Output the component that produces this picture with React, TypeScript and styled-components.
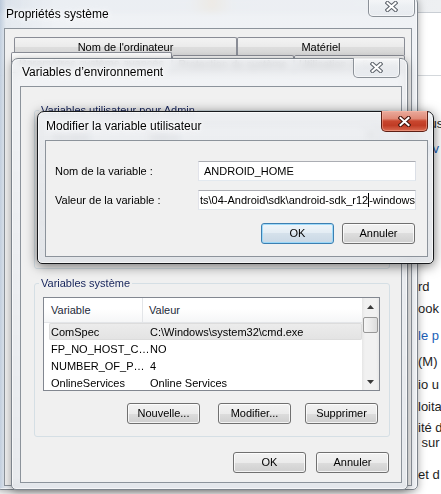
import React from "react";
import styled, { createGlobalStyle, css } from "styled-components";

const FONT = `"Liberation Sans", Arial, sans-serif`;

const GlobalStyle = createGlobalStyle`
  html, body { margin: 0; padding: 0; background: #fff; }
  body { font-family: ${FONT}; font-size: 11px; color: #000; overflow: hidden; }
`;

const Desktop = styled.div`
  position: relative;
  width: 441px;
  height: 494px;
  overflow: hidden;
  background: #fff;
  font-family: ${FONT};
  font-size: 11px;
  color: #000;
`;

/* ---------- page behind the windows ---------- */
const Backdrop = styled.div`
  position: absolute;
  inset: 0;
  z-index: 0;
  display: flex;
  flex-direction: column;
  background: #fff;
`;
const PageToolbar = styled.div`
  flex: none;
  height: 12px;
  border-bottom: 1px solid #c9ced4;
  background: linear-gradient(
    90deg,
    #b9c6d6 0,
    #e3e8ee 30px,
    #e7eaee 190px,
    #efcf9c 212px,
    #e7eaee 232px,
    #eef0f2 100%
  );
`;
const PageRule = styled.div`
  flex: none;
  margin-top: 62px;
  border-top: 1px solid #d4d8dc;
`;
const PageColumn = styled.div`
  display: flex;
  flex-direction: column;
  align-items: flex-start;
  font-family: ${FONT};
  font-size: 13px;
  line-height: 15px;
  white-space: nowrap;
`;
const PageLine = styled.div<{ $gap: number; $x?: number; $link?: boolean }>`
  margin-top: ${(p) => p.$gap}px;
  margin-left: ${(p) => p.$x ?? 418}px;
  color: ${(p) => (p.$link ? "#1c5fb8" : "#1e1e1e")};
`;

/* ---------- window chrome ---------- */
const FrameWindow = styled.section<{
  $x: number;
  $y: number;
  $w: number;
  $h: number;
  $z: number;
  $pad: string;
  $active?: boolean;
  $tint?: boolean;
}>`
  position: absolute;
  left: ${(p) => p.$x}px;
  top: ${(p) => p.$y}px;
  width: ${(p) => p.$w}px;
  height: ${(p) => p.$h}px;
  z-index: ${(p) => p.$z};
  box-sizing: border-box;
  display: flex;
  flex-direction: column;
  padding: ${(p) => p.$pad};
  border: 1px solid ${(p) => (p.$active ? "#17191c" : "#7d848c")};
  border-radius: 7px 7px 5px 5px;
  background: ${(p) =>
    p.$active
      ? "linear-gradient(180deg, rgba(236,238,241,0.86) 0%, rgba(224,227,231,0.92) 100%)"
      : p.$tint
      ? "linear-gradient(90deg, rgba(170,188,210,0.92) 0px, rgba(224,230,237,0.86) 9px, rgba(236,239,243,0.84) 60px, rgba(236,239,243,0.84) 100%)"
      : "linear-gradient(180deg, rgba(238,240,243,0.82) 0%, rgba(230,233,237,0.9) 100%)"};
  backdrop-filter: blur(3px);
  box-shadow: inset 0 0 0 1px rgba(255, 255, 255, 0.6),
    0 2px ${(p) => (p.$active ? "12px" : "8px")}
      rgba(0, 0, 0, ${(p) => (p.$active ? 0.55 : 0.35)});
`;

const TitleBar = styled.header<{ $h: number }>`
  flex: none;
  height: ${(p) => p.$h}px;
  display: flex;
  justify-content: space-between;
  align-items: flex-start;
`;

const Caption = styled.h1<{ $top: number; $left: number }>`
  margin: 0;
  padding: ${(p) => p.$top}px 0 0 ${(p) => p.$left}px;
  font: 400 12px/15px ${FONT};
  color: #000;
  white-space: nowrap;
  text-shadow: 0 0 6px #fff, 0 0 3px #fff;
`;

const CloseButton = styled.div<{ $h: number; $right: number; $active?: boolean }>`
  flex: none;
  box-sizing: border-box;
  width: 47px;
  height: ${(p) => p.$h}px;
  margin: -1px ${(p) => p.$right}px 0 0;
  display: flex;
  align-items: center;
  justify-content: center;
  border: 1px solid ${(p) => (p.$active ? "#5e1f15" : "#8b9198")};
  border-top: none;
  border-radius: 0 0 5px 5px;
  ${(p) =>
    p.$active
      ? css`
          background: linear-gradient(
            180deg,
            #eaab9d 0%,
            #e08a77 38%,
            #c9472f 50%,
            #c03c25 72%,
            #da6b52 100%
          );
          box-shadow: inset 0 0 0 1px rgba(255, 190, 170, 0.45);
        `
      : css`
          background: linear-gradient(
            180deg,
            rgba(255, 255, 255, 0.6) 0%,
            rgba(236, 239, 243, 0.55) 50%,
            rgba(226, 230, 235, 0.6) 100%
          );
          box-shadow: inset 0 0 0 1px rgba(255, 255, 255, 0.55);
        `}
`;

const CloseGlyph: React.FC<{ active?: boolean }> = ({ active }) => (
  <svg width="13" height="11" viewBox="0 0 13 11">
    <path
      d="M2.5 2 L10.5 9 M10.5 2 L2.5 9"
      stroke={active ? "#43140c" : "#60666e"}
      strokeWidth="4.2"
      strokeLinecap="square"
      fill="none"
    />
    <path
      d="M2.5 2 L10.5 9 M10.5 2 L2.5 9"
      stroke="#ffffff"
      strokeWidth="2"
      strokeLinecap="square"
      fill="none"
    />
  </svg>
);

const Client = styled.div`
  flex: 1;
  min-height: 0;
  box-sizing: border-box;
  display: flex;
  flex-direction: column;
  border: 1px solid #8c939b;
  background: #f0f0f0;
  overflow: hidden;
`;

/* ---------- tabs (System properties) ---------- */
const TabStrip = styled.div`
  flex: 1;
  display: flex;
  flex-direction: column;
  padding: 8px 0 0 6px;
`;
const TabRow = styled.div<{ $h: number; $indent: number }>`
  flex: none;
  display: flex;
  align-items: flex-end;
  height: ${(p) => p.$h}px;
  padding-left: ${(p) => p.$indent}px;
`;
const Tab = styled.div<{ $w: number; $h: number; $selected?: boolean }>`
  position: relative;
  z-index: ${(p) => (p.$selected ? 1 : 0)};
  flex: none;
  box-sizing: border-box;
  width: ${(p) => p.$w}px;
  height: ${(p) => p.$h}px;
  display: flex;
  align-items: center;
  justify-content: center;
  border: 1px solid #898c95;
  border-bottom: none;
  border-radius: 2px 2px 0 0;
  font-size: 11px;
  white-space: nowrap;
  color: #000;
  background: ${(p) =>
    p.$selected
      ? "#fcfcfc"
      : "linear-gradient(180deg, #f3f3f3 0%, #ebebeb 50%, #dedede 50%, #d6d6d6 100%)"};
`;
const TabPage = styled.div`
  flex: 1;
  width: 394px;
  box-sizing: border-box;
  border: 1px solid #898c95;
  background: #fcfcfc;
`;

/* ---------- group boxes, list views, buttons ---------- */
const EnvBody = styled.div`
  flex: 1;
  display: flex;
  flex-direction: column;
  padding: 17px 11px 0 13px;
`;

const GroupBox = styled.fieldset<{ $h: number; $mt?: number }>`
  flex: none;
  box-sizing: border-box;
  height: ${(p) => p.$h}px;
  margin: ${(p) => p.$mt ?? 0}px 0 0 0;
  padding: 0 9px 0 8px;
  min-width: 0;
  border: 1px solid #d5dfe5;
  border-radius: 3px;
  display: flex;
  flex-direction: column;
`;
const GroupLegend = styled.legend`
  margin-left: -4px;
  padding: 0 2px;
  font: 11px/13px ${FONT};
  color: #15235a;
`;

const ListView = styled.div<{ $h: number }>`
  flex: none;
  margin-top: 7px;
  height: ${(p) => p.$h}px;
  box-sizing: border-box;
  display: flex;
  border: 1px solid #828790;
  background: #fff;
`;
const ListMain = styled.div`
  flex: 1;
  min-width: 0;
  display: flex;
  flex-direction: column;
  overflow: hidden;
`;
const ListHeader = styled.div`
  flex: none;
  display: grid;
  grid-template-columns: 99px 1fr;
  height: 25px;
  box-sizing: border-box;
  border-bottom: 1px solid #e3e5e8;
  background: linear-gradient(180deg, #ffffff 0%, #ffffff 45%, #f5f6f7 100%);
`;
const HeaderCell = styled.div<{ $pad: number; $divider?: boolean }>`
  display: flex;
  align-items: center;
  padding-left: ${(p) => p.$pad}px;
  border-right: ${(p) => (p.$divider ? "1px solid #e3e5e8" : "none")};
  white-space: nowrap;
  color: #1e2a3a;
`;
const ListRow = styled.div<{ $selected?: boolean }>`
  flex: none;
  display: grid;
  grid-template-columns: 99px 1fr;
  align-items: center;
  height: 17px;
  margin-left: 5px;
  box-sizing: border-box;
  border-radius: 2px;
  ${(p) =>
    p.$selected &&
    css`
      background: linear-gradient(180deg, #ececec 0%, #e3e3e3 100%);
      box-shadow: inset 0 0 0 1px #dcdcdc;
    `}
`;
const Cell = styled.div`
  padding-left: 2px;
  white-space: nowrap;
  overflow: hidden;
`;

const ScrollBar = styled.div`
  flex: none;
  width: 17px;
  display: flex;
  flex-direction: column;
  background: linear-gradient(90deg, #e6e6e6 0, #f1f1f1 3px, #f1f1f1 14px, #e8e8e8 100%);
`;
const ScrollArrow = styled.div`
  flex: none;
  height: 17px;
  display: flex;
  align-items: center;
  justify-content: center;
`;
const ScrollThumb = styled.div`
  flex: none;
  margin: 2px 1px 0;
  height: 16px;
  box-sizing: border-box;
  border: 1px solid #989898;
  border-radius: 2px;
  background: linear-gradient(90deg, #f5f5f5 0%, #e9e9e9 55%, #dcdcdc 100%);
`;
const ScrollSpacer = styled.div`
  flex: 1;
`;

const Arrow: React.FC<{ down?: boolean }> = ({ down }) => (
  <svg width="7" height="4" viewBox="0 0 7 4">
    <polygon points={down ? "0,0 7,0 3.5,4" : "0,4 7,4 3.5,0"} fill="#3a3a3a" />
  </svg>
);

const ButtonRow = styled.div<{ $mt: number; $right: number; $gap?: number }>`
  flex: none;
  display: flex;
  justify-content: flex-end;
  gap: ${(p) => p.$gap ?? 0}px;
  margin-top: ${(p) => p.$mt}px;
  padding-right: ${(p) => p.$right}px;
`;

const PushButton = styled.div<{ $default?: boolean; $ml?: number }>`
  flex: none;
  box-sizing: border-box;
  width: 73px;
  height: 21px;
  margin-left: ${(p) => p.$ml ?? 0}px;
  display: flex;
  align-items: center;
  justify-content: center;
  font: 11px/13px ${FONT};
  color: #000;
  border: 1px solid ${(p) => (p.$default ? "#3c7fb1" : "#707070")};
  border-radius: 3px;
  background: ${(p) =>
    p.$default
      ? "linear-gradient(180deg, #eef5fa 0%, #e3ecf3 50%, #d5e1eb 50%, #c9d8e5 100%)"
      : "linear-gradient(180deg, #f2f2f2 0%, #ebebeb 50%, #dddddd 50%, #cfcfcf 100%)"};
  box-shadow: inset 0 0 0 1px
    ${(p) => (p.$default ? "rgba(150,215,250,0.9)" : "rgba(255,255,255,0.75)")};
`;

/* ---------- edit dialog ---------- */
const EditForm = styled.div`
  flex: 1;
  display: flex;
  flex-direction: column;
  padding: 20px 11px 12px 9px;
`;
const FieldGrid = styled.div`
  display: grid;
  grid-template-columns: 143px 218px;
  row-gap: 9px;
  align-items: center;
`;
const FieldLabel = styled.label`
  font: 11px/13px ${FONT};
  white-space: nowrap;
`;
const TextField = styled.div<{ $pad: number }>`
  box-sizing: border-box;
  height: 20px;
  display: flex;
  align-items: center;
  padding-left: ${(p) => p.$pad}px;
  border: 1px solid;
  border-color: #abadb3 #dbdfe6 #e3e9ef #e2e3ea;
  background: #fff;
  overflow: hidden;
  white-space: nowrap;
  font: 11px/13px ${FONT};
`;
const Caret = styled.span`
  flex: none;
  width: 0;
  height: 14px;
  border-left: 1px solid #000;
`;

/* ---------- data ---------- */
type Var = { name: string; value: string };

const systemVars: Var[] = [
  { name: "ComSpec", value: "C:\\Windows\\system32\\cmd.exe" },
  { name: "FP_NO_HOST_C\u2026", value: "NO" },
  { name: "NUMBER_OF_P\u2026", value: "4" },
  { name: "OnlineServices", value: "Online Services" },
];

const VarList: React.FC<{ rows: Var[]; h: number; selected?: number }> = ({
  rows,
  h,
  selected,
}) => (
  <ListView $h={h}>
    <ListMain>
      <ListHeader>
        <HeaderCell $pad={7} $divider>
          Variable
        </HeaderCell>
        <HeaderCell $pad={6}>Valeur</HeaderCell>
      </ListHeader>
      {rows.map((r, i) => (
        <ListRow key={r.name} $selected={i === selected}>
          <Cell>{r.name}</Cell>
          <Cell>{r.value}</Cell>
        </ListRow>
      ))}
    </ListMain>
    <ScrollBar>
      <ScrollArrow>
        <Arrow />
      </ScrollArrow>
      <ScrollThumb />
      <ScrollSpacer />
      <ScrollArrow>
        <Arrow down />
      </ScrollArrow>
    </ScrollBar>
  </ListView>
);

const pageLines: { text: string; gap: number; link?: boolean; x?: number }[] = [
  { text: "Plus", gap: 40 },
  { text: "env", gap: 10, link: true },
  { text: "rd", gap: 123 },
  { text: "ook", gap: 7 },
  { text: "le p", gap: 12, link: true },
  { text: "(M)", gap: 11 },
  { text: "io u", gap: 8 },
  { text: "loita", gap: 7 },
  { text: "ité d", gap: 6 },
  { text: "\u00a0sur", gap: 0 },
  { text: "et d", gap: 17 },
  { text: "Dimensions et autres informations", gap: 9, x: 2 },
];

export default function App() {
  return (
    <>
      <GlobalStyle />
      <Desktop>
        <Backdrop>
          <PageToolbar />
          <PageRule />
          <PageColumn>
            {pageLines.map((l) => (
              <PageLine key={l.text} $gap={l.gap} $link={l.link} $x={l.x}>
                {l.text}
              </PageLine>
            ))}
          </PageColumn>
        </Backdrop>

        {/* Propriétés système */}
        <FrameWindow $x={-4} $y={-4} $w={422} $h={494} $z={1} $pad="0 5px 3px 7px" $tint>
          <TitleBar $h={31}>
            <Caption $top={10} $left={2}>
              Propriétés système
            </Caption>
            <CloseButton $h={21} $right={-3}>
              <CloseGlyph />
            </CloseButton>
          </TitleBar>
          <Client>
            <TabStrip>
              <TabRow $h={18} $indent={3}>
                <Tab $w={223} $h={18}>
                  Nom de l'ordinateur
                </Tab>
                <Tab $w={168} $h={18}>
                  Matériel
                </Tab>
              </TabRow>
              <TabRow $h={17} $indent={0}>
                <Tab $w={161} $h={20} $selected>
                  Paramètres système avancés
                </Tab>
                <Tab $w={122} $h={17}>
                  Protection du système
                </Tab>
                <Tab $w={111} $h={17}>
                  Utilisation à distance
                </Tab>
              </TabRow>
              <TabPage />
            </TabStrip>
          </Client>
        </FrameWindow>

        {/* Variables d'environnement */}
        <FrameWindow $x={11} $y={58} $w={397} $h={432} $z={2} $pad="0 5px 6px 8px">
          <TitleBar $h={27}>
            <Caption $top={6} $left={2}>
              Variables d’environnement
            </Caption>
            <CloseButton $h={20} $right={2}>
              <CloseGlyph />
            </CloseButton>
          </TitleBar>
          <Client>
            <EnvBody>
              <GroupBox $h={165}>
                <GroupLegend>Variables utilisateur pour Admin</GroupLegend>
                <VarList rows={[]} h={99} />
              </GroupBox>
              <GroupBox $h={160} $mt={8}>
                <GroupLegend>Variables système</GroupLegend>
                <VarList rows={systemVars} h={94} selected={0} />
                <ButtonRow $mt={12} $right={2}>
                  <PushButton>Nouvelle...</PushButton>
                  <PushButton $ml={18}>Modifier...</PushButton>
                  <PushButton $ml={14}>Supprimer</PushButton>
                </ButtonRow>
              </GroupBox>
              <ButtonRow $mt={15} $right={1} $gap={10}>
                <PushButton>OK</PushButton>
                <PushButton>Annuler</PushButton>
              </ButtonRow>
            </EnvBody>
          </Client>
        </FrameWindow>

        {/* Modifier la variable utilisateur */}
        <FrameWindow $x={37} $y={111} $w={397} $h={153} $z={3} $pad="0 5px 6px 7px" $active>
          <TitleBar $h={28}>
            <Caption $top={7} $left={1}>
              Modifier la variable utilisateur
            </Caption>
            <CloseButton $h={21} $right={0} $active>
              <CloseGlyph active />
            </CloseButton>
          </TitleBar>
          <Client>
            <EditForm>
              <FieldGrid>
                <FieldLabel>Nom de la variable :</FieldLabel>
                <TextField $pad={5}>ANDROID_HOME</TextField>
                <FieldLabel>Valeur de la variable :</FieldLabel>
                <TextField $pad={1}>
                  ts\04-Android\sdk\android-sdk_r12
                  <Caret />
                  -windows
                </TextField>
              </FieldGrid>
              <ButtonRow $mt={13} $right={1} $gap={8}>
                <PushButton $default>OK</PushButton>
                <PushButton>Annuler</PushButton>
              </ButtonRow>
            </EditForm>
          </Client>
        </FrameWindow>
      </Desktop>
    </>
  );
}
